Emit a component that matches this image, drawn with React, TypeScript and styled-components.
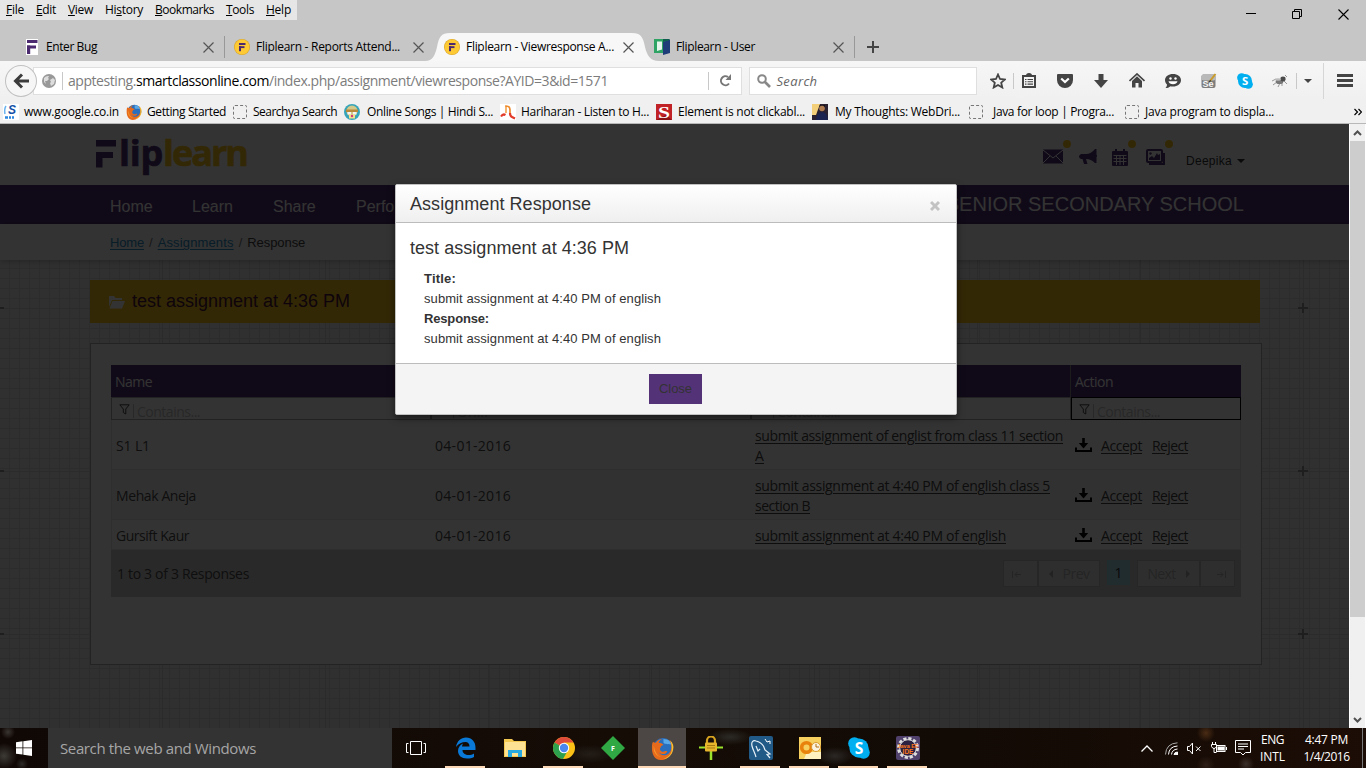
import React, { useLayoutEffect, useRef, useState } from 'react';
import styled, { createGlobalStyle, css } from 'styled-components';

const UI = `"Open Sans", "Noto Sans", sans-serif`;
const ARIAL = `"Liberation Sans", Arial, sans-serif`;

const Global = createGlobalStyle`
  * { box-sizing: border-box; }
  body { margin: 0; width: 1366px; height: 768px; overflow: hidden; font-family: ${UI}; font-size: 12px; color: #000; }
  svg { display: block; flex: none; }
`;

/* Text tracked so that it fills a given width exactly. */
const FitSpan = styled.span`
  white-space: pre;
`;
function Fit({ w, children }: { w: number; children: React.ReactNode }) {
  const ref = useRef<HTMLSpanElement>(null);
  const [spacing, setSpacing] = useState(0);
  useLayoutEffect(() => {
    const el = ref.current;
    if (!el) return;
    el.style.letterSpacing = '0px';
    const n = (el.textContent || '').length;
    setSpacing((w - el.getBoundingClientRect().width) / n);
  }, [w]);
  return <FitSpan ref={ref} style={{ letterSpacing: `${spacing}px` }}>{children}</FitSpan>;
}

const Screen = styled.div`
  width: 1366px;
  height: 768px;
  display: flex;
  flex-direction: column;
  overflow: hidden;
`;

/* ---------- browser chrome ---------- */
const TitleArea = styled.div`
  height: 61px;
  background: #c6c6c6;
  display: flex;
  flex-direction: column;
`;
const TitleRow = styled.div`
  display: flex;
  justify-content: space-between;
  height: 33px;
`;
const MenuBar = styled.div`
  width: 297px;
  height: 20px;
  background: #e6e6e6;
  padding-left: 6px;
  display: flex;
  gap: 12px;
  align-items: flex-start;
  line-height: 20px;
`;
const U = styled.u`
  text-underline-offset: 1px;
`;
const WindowButtons = styled.div`
  display: flex;
  width: 138px;
  height: 28px;
`;
const WinBtn = styled.div`
  width: 46px;
  display: flex;
  align-items: center;
  justify-content: center;
`;
const TabStrip = styled.div`
  display: flex;
  height: 28px;
  padding-left: 15px;
`;
const TabBox = styled.div<{ $active?: boolean; $sep?: boolean }>`
  position: relative;
  width: 210px;
  height: 28px;
  padding: 0 11px 0 9px;
  display: flex;
  align-items: center;
  gap: 6px;
  ${p => p.$active && css`z-index: 1;`}
  ${p => p.$sep && css`
    &::after {
      content: '';
      position: absolute;
      right: 0;
      top: 3px;
      width: 1px;
      height: 22px;
      background: #989898;
    }`}
`;
const TabShape = styled.svg`
  position: absolute;
  left: -10px;
  top: 0;
`;
const TabLabel = styled.div`
  position: relative;
  flex: 1;
  line-height: 28px;
`;
const TabIcon = styled.div`
  position: relative;
  width: 16px;
`;
const NewTab = styled.div`
  width: 36px;
  display: flex;
  align-items: center;
  justify-content: center;
`;
const Toolbar = styled.div`
  height: 39px;
  background: linear-gradient(#f6f6f6, #f0f0f0);
  display: flex;
  align-items: center;
  padding-left: 5px;
`;
const BackButton = styled.div`
  position: relative;
  z-index: 1;
  width: 32px;
  height: 32px;
  border-radius: 50%;
  border: 1px solid #c0c0c0;
  background: #f6f6f6;
  display: flex;
  align-items: center;
  justify-content: center;
`;
const UrlBox = styled.div`
  width: 710px;
  height: 28px;
  margin-left: -4px;
  background: #fff;
  border: 1px solid #dfdfdf;
  display: flex;
  align-items: center;
  padding-left: 8px;
  font-size: 14px;
  color: #7c7c7c;
`;
const VLine = styled.i<{ $h: number; $ml?: number; $mr?: number; $c?: string }>`
  width: 1px;
  height: ${p => p.$h}px;
  background: ${p => p.$c ?? '#c8c8c8'};
  margin-left: ${p => p.$ml ?? 0}px;
  margin-right: ${p => p.$mr ?? 0}px;
`;
const Host = styled.b`
  font-weight: 400;
  color: #000;
`;
const UrlText = styled.div`
  width: 640px;
  line-height: 24px;
`;
const SearchBox = styled.div`
  width: 228px;
  height: 28px;
  margin: 0 0 0 7px;
  background: #fff;
  border: 1px solid #dfdfdf;
  display: flex;
  align-items: center;
  gap: 5px;
  padding-left: 7px;
  font-style: italic;
  font-size: 13px;
  color: #666;
`;
const Slot = styled.div<{ $w?: number }>`
  width: ${p => p.$w ?? 36}px;
  height: 39px;
  display: flex;
  align-items: center;
  justify-content: center;
`;
const Bookmarks = styled.div`
  height: 24px;
  background: #f0f0f0;
  border-bottom: 1px solid #b8b8b8;
  display: flex;
  padding-left: 3px;
  line-height: 23px;
`;
const Bookmark = styled.div<{ $w: number; $gap: number }>`
  width: ${p => p.$w}px;
  display: flex;
  align-items: center;
  gap: ${p => p.$gap}px;
`;
const Dashed = styled.i`
  width: 14px;
  height: 14px;
  border: 1px dashed #777;
  border-radius: 2px;
`;

/* ---------- web page ---------- */
const Viewport = styled.div`
  position: relative;
  height: 604px;
  display: flex;
`;
const Page = styled.div`
  position: relative;
  width: 1349px;
  height: 604px;
  overflow: hidden;
  font-family: ${ARIAL};
  background: #fff;
`;
const Header = styled.header`
  height: 61px;
  padding: 0 104px 0 96px;
  display: flex;
  justify-content: space-between;
`;
const Logo = styled.div`
  display: flex;
  height: 61px;
  padding-top: 16px;
  font: 700 36px/36px "Open Sans", sans-serif;
  color: #533278;
`;
const LogoWord = styled.span<{ $gold?: boolean }>`
  margin-left: ${p => (p.$gold ? 0 : 2)}px;
  margin-top: -5px;
  color: ${p => (p.$gold ? '#fcc71f' : '#533278')};
  -webkit-text-stroke: 0.7px currentColor;
`;
const HeaderTools = styled.div`
  display: flex;
  height: 61px;
  padding-top: 25px;
`;
const ToolItem = styled.div<{ $w: number; $dot?: number }>`
  position: relative;
  width: ${p => p.$w}px;
  ${p => p.$dot !== undefined && css`
    &::after {
      content: '';
      position: absolute;
      left: ${p.$dot}px;
      top: -9px;
      width: 8px;
      height: 8px;
      border-radius: 50%;
      background: #fcc71f;
    }`}
`;
const UserName = styled.div`
  width: 59px;
  height: 24px;
  display: flex;
  align-items: center;
  gap: 5px;
  font-size: 12px;
  color: #333;
`;
const Caret = styled.i<{ $c?: string }>`
  border: 4px solid transparent;
  border-top-color: ${p => p.$c ?? '#333'};
  border-bottom: 0;
`;
const Nav = styled.nav`
  height: 39px;
  background: #533278;
  color: #fff;
  padding: 0 105px 0 110px;
  display: flex;
  align-items: center;
  font-size: 16px;
  line-height: 40px;
`;
const NavItem = styled.span<{ $w: number }>`
  width: ${p => p.$w}px;
  padding-top: 4px;
`;
const School = styled.span`
  margin-left: auto;
  font-size: 20px;
  line-height: 34px;
  margin-top: -1px;
`;
const Crumbs = styled.div`
  height: 36px;
  padding-left: 110px;
  display: flex;
  gap: 5px;
  font-size: 13px;
  line-height: 37px;
  color: #777;
  background: #fff;
  box-shadow: 0 1px 6px rgba(0, 0, 0, 0.25);
  position: relative;
`;
const CrumbLink = styled.a`
  color: #2a8fc8;
  text-decoration: underline;
  text-underline-offset: 2px;
`;
const CrumbNow = styled.span`
  color: #444;
`;
const Canvas = styled.main`
  height: 468px;
  padding: 20px 0 0 90px;
  background-color: #ededed;
  background-image:
    linear-gradient(90deg, #d4d4d4 1px, transparent 1px), linear-gradient(#d4d4d4 1px, transparent 1px),
    linear-gradient(90deg, #dddddd 1px, transparent 1px), linear-gradient(#dddddd 1px, transparent 1px);
  background-size: 163px 163px, 163px 163px, 10px 10px, 10px 10px;
  background-position: -1px 48px;
`;
const CrossLayer = styled.svg`
  position: absolute;
  left: 0;
  top: 136px;
`;
const TitleBar = styled.div`
  position: relative;
  width: 1170px;
  height: 43px;
  background: #fcc71f;
  display: flex;
  align-items: center;
  padding-left: 18px;
  gap: 5px;
  font-size: 18px;
  line-height: 45px;
  color: #4a1538;
`;
const Panel = styled.section`
  position: relative;
  width: 1172px;
  height: 322px;
  margin-top: 20px;
  padding: 21px 0 0 20px;
  border: 1px solid #b0b0b0;
  background: #fff;
`;
const Table = styled.div`
  width: 1130px;
  font: 14px/20px ${UI};
  color: #4c4c4c;
`;
const grid = css`
  display: grid;
  grid-template-columns: 320px 320px 320px 170px;
`;
const HeadRow = styled.div`
  ${grid}
  height: 32px;
  background: #533278;
  color: #fff;
  line-height: 34px;
`;
const HeadCell = styled.div<{ $sep?: boolean }>`
  height: 32px;
  ${p => (p.$sep
    ? css`margin-left: -1px; padding-left: 4px; border-left: 1px solid #8c8c8c;`
    : css`padding-left: 4px;`)}
`;
const FilterRow = styled.div`
  ${grid}
  height: 23px;
`;
const FilterCell = styled.div<{ $dark?: boolean }>`
  height: 23px;
  border: 1px solid ${p => (p.$dark ? '#000' : '#a8a8a8')};
  display: flex;
  align-items: flex-start;
  padding: 6px 0 0 7px;
  color: #c4c4c4;
  line-height: 18px;
`;
const FilterHint = styled.span`
  margin-top: -1px;
`;
const Row = styled.div<{ $h: number; $alt?: boolean }>`
  ${grid}
  height: ${p => p.$h}px;
  align-items: center;
  background: ${p => (p.$alt ? '#f5f5f5' : '#fff')};
  box-shadow: inset 1px 0 #e3e3e3, inset -1px 0 #e3e3e3, inset 0 -1px #e3e3e3;
  padding-top: 2px;
`;
const Cell = styled.div<{ $first?: boolean }>`
  padding-left: ${p => (p.$first ? 5 : 4)}px;
`;
const ActionCell = styled.div`
  padding-left: 4px;
  display: flex;
  align-items: center;
`;
const Link = styled.a<{ $ml?: number }>`
  margin-left: ${p => p.$ml ?? 0}px;
  color: #444;
  text-decoration: underline;
  text-underline-offset: 2px;
`;
const Footer = styled.div`
  height: 47px;
  background: #cdcdcd;
  display: flex;
  padding: 10px 6px 0;
`;
const Count = styled.div`
  flex: 1;
  padding-top: 4px;
`;
const PageBtn = styled.div<{ $w: number }>`
  width: ${p => p.$w}px;
  height: 27px;
  border: 1px solid #bdbdbd;
  background: #e6e6e6;
  color: #b4b4b4;
  display: flex;
  align-items: center;
  justify-content: center;
  gap: 10px;
  padding-top: 1px;
`;
const PageNo = styled.div`
  width: 23px;
  height: 25px;
  margin: 0 7px;
  background: #a5dbe8;
  color: #333;
  line-height: 26px;
  text-align: center;
`;
const Backdrop = styled.div`
  position: absolute;
  inset: 0;
  background: rgba(0, 0, 0, 0.8);
`;
const Modal = styled.div`
  position: absolute;
  left: 395px;
  top: 60px;
  width: 562px;
  height: 231px;
  border: 1px solid #c2c2c2;
  border-radius: 2px;
  background: #fff;
  box-shadow: 0 3px 7px rgba(0, 0, 0, 0.5);
  color: #333;
  display: flex;
  flex-direction: column;
  overflow: hidden;
`;
const ModalHead = styled.div`
  height: 38px;
  padding: 0 16px 0 14px;
  display: flex;
  justify-content: space-between;
  font-size: 18px;
  line-height: 38px;
  background: linear-gradient(#fff, #efefef);
  border-bottom: 1px solid #bcbcbc;
`;
const ModalBody = styled.div`
  flex: 1;
  padding: 15px 14px 0;
`;
const ModalTitle = styled.h4`
  margin: 0 0 11px;
  font-weight: 400;
  font-size: 18px;
  line-height: 20px;
`;
const Line = styled.div<{ $bold?: boolean }>`
  padding-left: 14px;
  font-size: 13px;
  line-height: 20px;
  font-weight: ${p => (p.$bold ? 700 : 400)};
`;
const ModalFoot = styled.div`
  height: 51px;
  background: #f4f4f4;
  border-top: 1px solid #bcbcbc;
  display: flex;
  justify-content: center;
  padding-top: 10px;
`;
const CloseBtn = styled.div`
  width: 53px;
  height: 30px;
  margin-right: 1px;
  background: #533278;
  color: #333;
  text-align: center;
  font-size: 13px;
  line-height: 30px;
`;
const Scrollbar = styled.div`
  width: 17px;
  height: 604px;
  background: #f0f0f0;
  border-left: 1px solid #fff;
  border-right: 1px solid #fff;
  display: flex;
  flex-direction: column;
  align-items: center;
`;
const ScrollBtn = styled.div`
  height: 17px;
  display: flex;
  align-items: center;
`;
const Thumb = styled.div`
  width: 15px;
  height: 476px;
  background: #cdcdcd;
  margin-bottom: auto;
`;

/* ---------- taskbar ---------- */
const Taskbar = styled.footer`
  height: 40px;
  display: flex;
  color: #fff;
  background:
    radial-gradient(circle at 8px 4px, #3a3532 0, transparent 7px),
    radial-gradient(circle at 4px 28px, #3d3a35 0, transparent 13px),
    radial-gradient(circle at 22px 36px, #2d2a27 0, transparent 6px),
    radial-gradient(ellipse 22px 8px at 730px 9px, #2c2a25 0, transparent 100%),
    radial-gradient(ellipse 18px 9px at 835px 28px, #2b2825 0, transparent 100%),
    radial-gradient(ellipse 26px 9px at 590px 26px, #231d18 0, transparent 100%),
    radial-gradient(circle at 1206px 5px, #4a2c14 0, transparent 9px),
    radial-gradient(circle at 1246px 36px, #3c302a 0, transparent 8px),
    radial-gradient(circle at 1206px 37px, #2e1f17 0, transparent 9px),
    linear-gradient(90deg, #100805, #150c06 45%, #120a05 70%, #1c0d06);
`;
const StartBtn = styled.div`
  width: 48px;
  display: flex;
  align-items: center;
  justify-content: center;
`;
const TaskSearch = styled.div`
  width: 344px;
  background: #333;
  color: #a6a6a6;
  padding-left: 12px;
  font-size: 15px;
  line-height: 40px;
`;
const TaskSlot = styled.div<{ $on?: boolean; $bar?: boolean; $w?: number }>`
  width: ${p => p.$w ?? 49}px;
  display: flex;
  align-items: center;
  justify-content: center;
  position: relative;
  background: ${p => (p.$on ? '#4c4744' : 'transparent')};
  ${p => p.$bar && css`
    &::after {
      content: '';
      position: absolute;
      bottom: 0;
      left: ${p.$on ? 0 : 4}px;
      right: ${p.$on ? 0 : 5}px;
      height: 2px;
      background: #fcd8b6;
    }`}
`;
const Tray = styled.div`
  margin-left: auto;
  width: 230px;
  display: flex;
  align-items: center;
`;
const TraySlot = styled.div<{ $w: number }>`
  width: ${p => p.$w}px;
  display: flex;
  justify-content: center;
`;
const TrayText = styled.div<{ $w: number }>`
  width: ${p => p.$w}px;
  text-align: center;
  line-height: 17px;
  font-size: 12px;
  padding-bottom: 1px;
`;
const ShowDesktop = styled.i`
  width: 4px;
  height: 40px;
  margin-left: auto;
  border-left: 1px solid #777;
`;

/* ---------- icons ---------- */
const FMark = ({ round }: { round?: boolean }) => (
  <svg width="16" height="16" viewBox="0 0 16 16">
    {round ? <circle cx="8" cy="8" r="8" fill="#d9a62b" /> : <rect x="2" y="0" width="12" height="16" fill="#fff" />}
    {round && <circle cx="8" cy="8" r="7.4" fill="#fdca35" />}
    <g fill="#4c2a70">
      {round ? (
        <><rect x="5" y="4" width="6.5" height="2" /><rect x="5" y="7.2" width="5.5" height="1.9" /><rect x="5" y="7.2" width="2" height="5" /></>
      ) : (
        <><rect x="3" y="1" width="10.5" height="3" /><rect x="3" y="6.5" width="9" height="3" /><rect x="3" y="6.5" width="3.2" height="8.5" /></>
      )}
    </g>
  </svg>
);
const DoorIcon = () => (
  <svg width="16" height="16" viewBox="0 0 16 16">
    <rect x="0" y="0" width="15" height="14" fill="#2fa363" />
    <path d="M3 2.500h5v8L3 12z" fill="#e6f5ec" />
    <path d="M9 3 16 .5V14l-7 2z" fill="#1d3c78" />
    <path d="M9 0h6.500v1L9 3z" fill="#0f5c50" />
  </svg>
);
const TabClose = styled.svg`
  position: relative;
`;
const X = () => (
  <TabClose width="11" height="11" viewBox="0 0 11 11">
    <path d="M.5.5l10 10M10.500.5l-10 10" stroke="#555" strokeWidth="1.200" />
  </TabClose>
);
const Firefox = ({ s }: { s: number }) => (
  <svg width={s} height={s} viewBox="0 0 24 24">
    <circle cx="12.5" cy="11.5" r="10.5" fill="#2a6fbd" />
    <path d="M13 2c5 0 8 3 9 6-3-1-8 0-9-2z" fill="#5aa9e6" />
    <path d="M2 5c1 1 2 1 3 1 2-3 5-4 7-4-3 1-4 3-4 4 2 0 4 1 5 2-1 1-3 1-3 3-1 1-1 3 1 4 3 1 4-1 6 0-1 3-6 4-9 1 3 5 11 4 13-3 1-4 0-7-2-10 3 2 4 6 3 11-1 6-6 10-12 10S1 18 1 12c0-3 0-5 1-7z" fill="#e66a1c" />
    <path d="M20 3.500c3 3 4 6 3 10-1 5-5 9-10 9.500 5-2 8-5 8.500-9 .500-4 0-7-1.500-10.500z" fill="#fbc02d" />
    <path d="M3 9c-1 6 2 11 8 12-4-1-7-5-8-12z" fill="#f59a2c" />
  </svg>
);
const Skype = ({ s }: { s: number }) => (
  <svg width={s} height={s} viewBox="0 0 24 24">
    <circle cx="12" cy="12" r="10.500" fill="#00aff0" />
    <circle cx="7" cy="7" r="6.800" fill="#00aff0" />
    <circle cx="17" cy="17" r="6.800" fill="#00aff0" />
    <text x="12" y="18.200" textAnchor="middle" fontFamily="Open Sans" fontWeight="700" fontSize="17" fill="#fff">S</text>
  </svg>
);
const Funnel = () => (
  <svg width="11" height="11" viewBox="0 0 11 11">
    <path d="M.8.8h9.400L6.800 5v5L4.300 8.500V5z" fill="none" stroke="#444" />
  </svg>
);
const Download = () => (
  <svg width="17" height="16" viewBox="0 0 17 16">
    <path d="M7.200 0h2.600v5h3.400L8.500 10.500 3.800 5h3.400zM0 9.500h2V12h13V9.500h2V14H0z" fill="#000" />
  </svg>
);
const Overflow = styled.svg`
  margin-top: 8px;
`;
const PagerGlyph = styled.svg<{ $shift: number }>`
  position: relative;
  left: ${p => p.$shift}px;
`;

const rows = [
  { name: 'S1 L1', nw: 34, h: 50, lines: [['submit assignment of englist from class 11 section', 308], ['A', 9]] },
  { name: 'Mehak Aneja', nw: 80, h: 50, alt: true, lines: [['submit assignment at 4:40 PM of english class 5', 295], ['section B', 55]] },
  { name: 'Gursift Kaur', nw: 73, h: 30, lines: [['submit assignment at 4:40 PM of english', 251]] },
] as { name: string; nw: number; h: number; alt?: boolean; lines: [string, number][] }[];

const menus: [string, string, string, number][] = [
  ['', 'F', 'ile', 18], ['', 'E', 'dit', 20], ['', 'V', 'iew', 25], ['Hi', 's', 'tory', 38],
  ['', 'B', 'ookmarks', 59], ['', 'T', 'ools', 28], ['', 'H', 'elp', 25],
];

const Tab = ({ icon, label, w, active, sep }: { icon: React.ReactNode; label: string; w: number; active?: boolean; sep?: boolean }) => (
  <TabBox $active={active} $sep={sep}>
    {active && (
      <TabShape width="238" height="28" viewBox="0 0 238 28">
        <path d="M0 28C8 28 10 22 12 14C14 4 16 0 25 0H207C216 0 218 4 220 14C222 22 225 28 234 28Z" fill="#f7f7f7" />
      </TabShape>
    )}
    <TabIcon>{icon}</TabIcon>
    <TabLabel><Fit w={w}>{label}</Fit></TabLabel>
    <X />
  </TabBox>
);

const Chrome = () => (
  <>
    <TitleArea>
      <TitleRow>
        <MenuBar>
          {menus.map(([a, u, b, w]) => <Fit key={u + b} w={w}>{a}<U>{u}</U>{b}</Fit>)}
        </MenuBar>
        <WindowButtons>
          <WinBtn><svg width="10" height="10"><path d="M0 4.500h10" stroke="#000" /></svg></WinBtn>
          <WinBtn><svg width="10" height="10" fill="none" stroke="#000"><path d="M.5 2.500h7v7h-7zM2.500 2.500v-2h7v7h-2" /></svg></WinBtn>
          <WinBtn><svg width="11" height="11"><path d="M.5.5l10 10M10.500.5l-10 10" stroke="#000" strokeWidth="1.100" /></svg></WinBtn>
        </WindowButtons>
      </TitleRow>
      <TabStrip>
        <Tab icon={<FMark />} label="Enter Bug" w={51} sep />
        <Tab icon={<FMark round />} label="Fliplearn - Reports Attend..." w={144} />
        <Tab icon={<FMark round />} label="Fliplearn - Viewresponse A..." w={148} active />
        <Tab icon={<DoorIcon />} label="Fliplearn - User" w={79} sep />
        <NewTab><svg width="12" height="12"><path d="M6 0v12M0 6h12" stroke="#444" strokeWidth="2" /></svg></NewTab>
      </TabStrip>
    </TitleArea>
    <Toolbar>
      <BackButton>
        <svg width="16" height="16" viewBox="0 0 16 16" fill="none" stroke="#3c3c3c" strokeWidth="3"><path d="M9 1.500 2.500 8 9 14.500M2.500 8H16" /></svg>
      </BackButton>
      <UrlBox>
        <svg width="14" height="14" viewBox="0 0 14 14">
          <circle cx="7" cy="7" r="7" fill="#999" />
          <path d="M2 4c2-2 4-2 5-2l-1 2 1 1-2 2H3l1 3-2-2zM8 6l3-2 2 2-1 4-3 2-1-3 1-1z" fill="#ddd" />
        </svg>
        <VLine $h={18} $ml={6} $mr={5} />
        <UrlText><Fit w={540}>apptesting.<Host>smartclassonline.com</Host>/index.php/assignment/viewresponse?AYID=3&amp;id=1571</Fit></UrlText>
        <VLine $h={18} $mr={10} />
        <svg width="13" height="13" viewBox="0 0 13 13"><path d="M10 9.500A4.500 4.500 0 1 1 9 3" fill="none" stroke="#777" strokeWidth="2" /><path d="M12 0v6H6.500z" fill="#777" /></svg>
      </UrlBox>
      <SearchBox>
        <svg width="14" height="14" viewBox="0 0 14 14" fill="none" stroke="#888" strokeWidth="2"><circle cx="5" cy="5" r="3.800" /><path d="M8 8l5 5" strokeWidth="2.600" /></svg>
        <Fit w={41}>Search</Fit>
      </SearchBox>
      <Slot $w={42}><svg width="16" height="16" viewBox="0 0 16 16"><path d="M8 1.500l2 4.500 4.800.5-3.600 3.200 1.100 4.800L8 12l-4.300 2.500 1.100-4.800L1.200 6.500 6 6z" fill="none" stroke="#444" strokeWidth="1.800" /></svg></Slot>
      <VLine $h={16} $ml={-6} $mr={-3} />
      <Slot>
        <svg width="14" height="15" viewBox="0 0 14 15"><path d="M1 3h12v11H1z" fill="#f4f4f4" stroke="#444" strokeWidth="2" /><path d="M4 2.500Q4 0 7 0t3 2.500z" fill="#444" /><path d="M3 6.500h1.500M5.500 6.500H11M3 8.800h1.500M5.500 8.800H11M3 11.100h1.500M5.500 11.100H11" stroke="#444" strokeWidth="1.100" /></svg>
      </Slot>
      <Slot><svg width="16" height="14" viewBox="0 0 16 14"><path d="M1 0h14q1 0 1 1v5a8 8 0 0 1-16 0V1q0-1 1-1z" fill="#444" /><path d="M4.200 4.500 8 8l3.800-3.500" fill="none" stroke="#fff" strokeWidth="2.200" /></svg></Slot>
      <Slot><svg width="14" height="14" viewBox="0 0 14 14"><path d="M4.500 0h5v6H14L7 14 0 6h4.500z" fill="#444" /></svg></Slot>
      <Slot><svg width="16" height="15" viewBox="0 0 16 15"><path d="M.5 8 8 1l7.500 7" fill="none" stroke="#444" strokeWidth="1.700" /><path d="M3 8l5-4.700L13 8v6.500H9.500V10h-3v4.500H3z" fill="#444" /></svg></Slot>
      <Slot>
        <svg width="16" height="16" viewBox="0 0 16 16"><path d="M8 1c4.500 0 8 2.500 8 6.200S12.500 13.500 8 13.500c-1 0-2 0-2.500-.3C4 14.500 2.500 15 .5 15 1.500 14 2 13 2 11.600 1 10.500 0 9 0 7.200 0 3.500 3.500 1 8 1z" fill="#444" /><circle cx="5.500" cy="5.500" r="1.200" fill="#fff" /><circle cx="10.500" cy="5.500" r="1.200" fill="#fff" /><path d="M3.500 8.200h9c-.5 4-8.500 4-9 0z" fill="#fff" /></svg>
      </Slot>
      <Slot>
        <svg width="16" height="16" viewBox="0 0 16 16"><rect x=".5" y="1.500" width="14" height="13.500" rx="2" fill="#7d7d7d" /><rect x=".5" y="1.500" width="14" height="6" rx="2" fill="#b9b9b9" /><text x="1.500" y="13.500" fontFamily="Liberation Sans" fontWeight="700" fontSize="9" fill="#f5f5f5">Se</text><path d="M14.500 1 9 8" stroke="#c99c2a" strokeWidth="2" /><path d="M9.500 7.300 8.500 9" stroke="#333" strokeWidth="1.200" /></svg>
      </Slot>
      <Slot><Skype s={16} /></Slot>
      <Slot $w={33}>
        <svg width="16" height="14" viewBox="0 0 16 14"><path d="M0 7l4-2M1 11l4-3M6 13l2-4M10 12l0-4M15 10l-3-3M13 1l2 2" stroke="#999" /><ellipse cx="7.500" cy="7.500" rx="3.800" ry="2.600" fill="#777" /><ellipse cx="11" cy="5" rx="2.600" ry="2.400" fill="#4a4a4a" /><ellipse cx="6" cy="5.500" rx="3" ry="1.200" fill="#bbb" /></svg>
      </Slot>
      <VLine $h={16} />
      <Slot $w={22}><Caret $c="#444" /></Slot>
      <VLine $h={36} $ml={4} $c="#d6d6d6" />
      <Slot $w={42}><svg width="16" height="13"><path d="M0 1.500h16M0 6.500h16M0 11.500h16" stroke="#444" strokeWidth="3" /></svg></Slot>
    </Toolbar>
    <Bookmarks>
      <Bookmark $w={123} $gap={5}>
        <svg width="16" height="16" viewBox="0 0 16 16"><rect width="16" height="16" fill="#fff" /><path d="M3 2Q1 5 2 10" stroke="#6bb3ee" fill="none" strokeWidth="1.500" /><text x="9" y="10" textAnchor="middle" fontFamily="Liberation Sans" fontWeight="700" fontStyle="italic" fontSize="12" fill="#1551a8">S</text><path d="M2 13.500h3M6 13.500h2M9 13.500h2" stroke="#2d86dd" strokeWidth="2.500" /></svg>
        <Fit w={95}>www.google.co.in</Fit>
      </Bookmark>
      <Bookmark $w={107} $gap={5}><Firefox s={16} /><Fit w={79}>Getting Started</Fit></Bookmark>
      <Bookmark $w={111} $gap={6}><Dashed /><Fit w={84}>Searchya Search</Fit></Bookmark>
      <Bookmark $w={156} $gap={7}>
        <svg width="16" height="16" viewBox="0 0 16 16"><circle cx="8" cy="8" r="8" fill="#36a5b9" /><circle cx="8" cy="7" r="5.500" fill="#d3c98a" /><rect x="2" y="5.500" width="12" height="2.500" fill="#b98a3a" /><rect x="3.500" y="8" width="3.500" height="2.500" fill="#f4f4f4" /><rect x="9" y="8" width="3.500" height="2.500" fill="#f4f4f4" /><rect x="5" y="10.500" width="6" height="4" fill="#f6e18c" /><circle cx="8" cy="12" r="1.200" fill="#d3397b" /></svg>
        <Fit w={126}>Online Songs | Hindi S...</Fit>
      </Bookmark>
      <Bookmark $w={156} $gap={5}>
        <svg width="16" height="16" viewBox="0 0 16 16"><rect width="16" height="16" fill="#fff" /><path d="M6 9V2q4 0 4 4v3" stroke="#ef8b2c" strokeWidth="1.700" fill="none" /><path d="M6 3v6" stroke="#f5b46e" strokeWidth="2" /><path d="M1 12.500q2-3 4.500-1.500M10 9q0 3 2 4l3 1.500" stroke="#e23b2a" strokeWidth="2.200" fill="none" /></svg>
        <Fit w={128}>Hariharan - Listen to H...</Fit>
      </Bookmark>
      <Bookmark $w={156} $gap={6}>
        <svg width="16" height="16" viewBox="0 0 16 16"><rect width="16" height="16" fill="#c02226" /><path d="M0 16 10 11 16 16z" fill="#8b1215" /><text x="8" y="13.500" textAnchor="middle" fontFamily="Liberation Serif" fontWeight="700" fontSize="16" textLength="12" lengthAdjust="spacingAndGlyphs" fill="#fff">S</text></svg>
        <Fit w={127}>Element is not clickabl...</Fit>
      </Bookmark>
      <Bookmark $w={157} $gap={7}>
        <svg width="16" height="16" viewBox="0 0 16 16"><rect width="16" height="16" fill="#2a2230" /><path d="M0 0h8L4 11H0z" fill="#f3cf7a" /><circle cx="10" cy="4.500" r="2.800" fill="#b07c50" /><path d="M7 3q3-4 6 0v-2H8z" fill="#1a1010" /><path d="M4 16q1-8 6-8t6 8z" fill="#1b2350" /></svg>
        <Fit w={125}>My Thoughts: WebDri...</Fit>
      </Bookmark>
      <Bookmark $w={156} $gap={10}><Dashed /><Fit w={121}>Java for loop | Progra...</Fit></Bookmark>
      <Bookmark $w={229} $gap={6}><Dashed /><Fit w={129}>Java program to displa...</Fit></Bookmark>
      <Overflow width="8" height="8" viewBox="0 0 8 8"><path d="M.5 1 3.500 4 .5 7M4.500 1 7.500 4 4.500 7" fill="none" stroke="#000" strokeWidth="1.200" /></Overflow>
    </Bookmarks>
  </>
);

const WebPage = () => (
  <Page>
    <Header>
      <Logo>
        <svg width="21" height="28" viewBox="0 0 21 28" fill="#533278">
          <rect x="0" y="0" width="20" height="6.500" /><rect x="0" y="12" width="17" height="6" /><rect x="0" y="12" width="6.500" height="15.500" />
        </svg>
        <LogoWord><Fit w={44}>lip</Fit></LogoWord>
        <LogoWord $gold><Fit w={84}>learn</Fit></LogoWord>
      </Logo>
      <HeaderTools>
        <ToolItem $w={36} $dot={20}>
          <svg width="20" height="15" viewBox="0 0 20 15"><rect y=".5" width="20" height="14" fill="#533278" /><path d="M0 1l10 8L20 1M0 14l7-7M20 14l-7-7" fill="none" stroke="#fff" /></svg>
        </ToolItem>
        <ToolItem $w={33}>
          <svg width="19" height="16" viewBox="0 0 19 16" fill="#533278"><path d="M16 0h1.500v5.500q1.300 1 0 3V14H16Q12 10 7 10l1.500 5H5L3.500 10H2Q0 9 0 7.500T2 5h5Q12 5 16 0z" /></svg>
        </ToolItem>
        <ToolItem $w={34} $dot={16}>
          <svg width="16" height="17" viewBox="0 0 16 17"><rect y="2" width="16" height="15" rx="1" fill="#533278" /><path d="M3 0h2v3H3zM11 0h2v3h-2z" fill="#533278" /><path d="M1.500 6.500h13M1.500 9.500h13M1.500 12.500h13M4.500 6v10M8 6v10M11.500 6v10" stroke="#fff" /></svg>
        </ToolItem>
        <ToolItem $w={40} $dot={19}>
          <svg width="19" height="16" viewBox="0 0 19 16"><path d="M3 15h15V4" fill="none" stroke="#533278" strokeWidth="2" /><rect x="1" y="1" width="15" height="12" rx="1" fill="#fff" stroke="#533278" strokeWidth="2" /><path d="M3 11V9l3-2 2 2 3-5 1 2 2-1v6z" fill="#533278" /><circle cx="4.500" cy="4.500" r="1.200" fill="#533278" /></svg>
        </ToolItem>
        <UserName><Fit w={46}>Deepika</Fit><Caret /></UserName>
      </HeaderTools>
    </Header>
    <Nav>
      <NavItem $w={82}>Home</NavItem>
      <NavItem $w={81}>Learn</NavItem>
      <NavItem $w={83}>Share</NavItem>
      <NavItem $w={50}>Perfor</NavItem>
      <School>SENIOR SECONDARY SCHOOL</School>
    </Nav>
    <Crumbs>
      <CrumbLink><Fit w={34}>Home</Fit></CrumbLink><span>/</span>
      <CrumbLink><Fit w={76}>Assignments</Fit></CrumbLink><span>/</span>
      <CrumbNow><Fit w={58}>Response</Fit></CrumbNow>
    </Crumbs>
    <Canvas>
      <CrossLayer width="1349" height="468" stroke="#949494" strokeWidth="2">
        {[48, 211, 374].map(y => (
          <path key={y} d={`M0 ${y}H4M1298 ${y}H1308M1303 ${y - 5}V${y + 5}`} />
        ))}
      </CrossLayer>
      <TitleBar>
        <svg width="19" height="14" viewBox="0 0 19 14" fill="#fff"><path d="M1 1h5l1.500 2H14v2H4L1 12z" /><path d="M4.500 6H17l-3 7.500H1.500z" /></svg>
        <Fit w={218}>test assignment at 4:36 PM</Fit>
      </TitleBar>
      <Panel>
        <Table>
          <HeadRow>
            <HeadCell><Fit w={37}>Name</Fit></HeadCell>
            <HeadCell />
            <HeadCell />
            <HeadCell $sep><Fit w={38}>Action</Fit></HeadCell>
          </HeadRow>
          <FilterRow>
            {['Contains...', 'On...', 'Contains...', 'Contains...'].map((t, i) => (
              <FilterCell key={i} $dark={i === 3}>
                <Funnel /><VLine $h={14} $ml={3} $mr={3} /><FilterHint><Fit w={t === 'On...' ? 31 : 63}>{t}</Fit></FilterHint>
              </FilterCell>
            ))}
          </FilterRow>
          {rows.map(r => (
            <Row key={r.name} $h={r.h} $alt={r.alt}>
              <Cell $first><Fit w={r.nw}>{r.name}</Fit></Cell>
              <Cell><Fit w={76}>04-01-2016</Fit></Cell>
              <Cell>{r.lines.map(([t, w]) => <div key={t}><Link><Fit w={w}>{t}</Fit></Link></div>)}</Cell>
              <ActionCell>
                <Download />
                <Link $ml={9}><Fit w={41}>Accept</Fit></Link>
                <Link $ml={10}><Fit w={36}>Reject</Fit></Link>
              </ActionCell>
            </Row>
          ))}
          <Footer>
            <Count><Fit w={132}>1 to 3 of 3 Responses</Fit></Count>
            <PageBtn $w={35}>
              <PagerGlyph $shift={-4} width="9" height="7" stroke="#b4b4b4" fill="none"><path d="M.5 0v7M9 3.500H3M5.500 1 3 3.500 5.500 6" /></PagerGlyph>
            </PageBtn>
            <PageBtn $w={62}><svg width="4" height="8"><path d="M4 0v8L0 4z" fill="#aaa" /></svg><Fit w={27}>Prev</Fit></PageBtn>
            <PageNo>1</PageNo>
            <PageBtn $w={63}><Fit w={28}>Next</Fit><svg width="4" height="8"><path d="M0 0v8l4-4z" fill="#aaa" /></svg></PageBtn>
            <PageBtn $w={35}>
              <PagerGlyph $shift={4} width="9" height="7" stroke="#b4b4b4" fill="none"><path d="M8.500 0v7M0 3.500h6M3.500 1 6 3.500 3.500 6" /></PagerGlyph>
            </PageBtn>
          </Footer>
        </Table>
      </Panel>
    </Canvas>
    <Backdrop />
    <Modal>
      <ModalHead>
        <Fit w={181}>Assignment Response</Fit>
        <svg width="10" height="42" viewBox="0 0 10 42"><path d="M1 17l8 8M9 17l-8 8" stroke="#c2c2c2" strokeWidth="3" /></svg>
      </ModalHead>
      <ModalBody>
        <ModalTitle><Fit w={219}>test assignment at 4:36 PM</Fit></ModalTitle>
        <Line $bold><Fit w={32}>Title:</Fit></Line>
        <Line><Fit w={237}>submit assignment at 4:40 PM of english</Fit></Line>
        <Line $bold><Fit w={65}>Response:</Fit></Line>
        <Line><Fit w={237}>submit assignment at 4:40 PM of english</Fit></Line>
      </ModalBody>
      <ModalFoot><CloseBtn><Fit w={33}>Close</Fit></CloseBtn></ModalFoot>
    </Modal>
  </Page>
);

const TaskBar = () => (
  <Taskbar>
    <StartBtn><svg width="16" height="16" viewBox="0 0 16 16" fill="#fff"><path d="M0 2.200 6.500 1.300v6.200H0zM7.300 1.200 16 0v7.500H7.300zM0 8.300h6.500v6.200L0 13.700zM7.300 8.300H16V16l-8.700-1.300z" /></svg></StartBtn>
    <TaskSearch><Fit w={196}>Search the web and Windows</Fit></TaskSearch>
    <TaskSlot $w={47}><svg width="20" height="14" viewBox="0 0 20 14" fill="none" stroke="#fff"><path d="M4.500.5h11v13h-11zM2.500 2.500h-2v9h2M17.500 2.500h2v9h-2" /></svg></TaskSlot>
    <TaskSlot $w={2} />
    <TaskSlot $bar>
      <svg width="21" height="22" viewBox="0 0 21 22"><path d="M1 10C2 4 6 .5 11 .5c6 0 9.500 4.500 9.500 10V13H7.500c0 3.500 3 5 6 5 2 0 4-.500 5.500-1.500V20c-2 1-4 1.500-7 1.500C6.500 21.500 3 18.500 3 14c0-3.500 2-6 5-7.500-.500 1-1 2-1 3h7.500c0-3-1.500-4.500-4-4.500C7 5 3.500 6.500 1 10z" fill="#0a78d7" /></svg>
    </TaskSlot>
    <TaskSlot>
      <svg width="22" height="18" viewBox="0 0 22 18"><path d="M0 0h8l2 2h12v16H0z" fill="#f3c952" /><path d="M1 3h20v14H1z" fill="#fde293" /><path d="M4 18v-7h14v7h-4v-4H8v4z" fill="#28a9e0" /></svg>
    </TaskSlot>
    <TaskSlot $bar>
      <svg width="22" height="22" viewBox="0 0 22 22"><circle cx="11" cy="11" r="11" fill="#fbc116" /><path d="M11 11 1.500 5.500A11 11 0 0 1 20.500 5.500H11z" fill="#de4b3b" /><path d="M11 11 1.500 5.500A11 11 0 0 0 10 22l4.500-8z" fill="#2da04e" /><circle cx="11" cy="11" r="5.200" fill="#fff" /><circle cx="11" cy="11" r="4.200" fill="#4a87ee" /></svg>
    </TaskSlot>
    <TaskSlot>
      <svg width="24" height="24" viewBox="0 0 24 24"><path d="M12 0 24 12 12 24 0 12z" fill="#30a843" /><text x="12" y="14.500" textAnchor="middle" fontFamily="Open Sans" fontWeight="700" fontSize="7" fill="#fff">F</text></svg>
    </TaskSlot>
    <TaskSlot $w={1} />
    <TaskSlot $on $bar $w={48}><Firefox s={23} /></TaskSlot>
    <TaskSlot $w={50}>
      <svg width="24" height="24" viewBox="0 0 24 24"><path d="M0 11.500h24" stroke="#9be22c" strokeWidth="2" /><path d="M12 12v12" stroke="#9be22c" strokeWidth="2.500" /><path d="M8 8V4.500a4 4 0 0 1 8 0V8" fill="none" stroke="#d9a520" strokeWidth="2.200" /><rect x="6" y="6.500" width="12" height="9" rx="1" fill="#e6b62d" /><path d="M8 9.500h8M8 12h8" stroke="#a87a12" /></svg>
    </TaskSlot>
    <TaskSlot $bar>
      <svg width="24" height="24" viewBox="0 0 24 24"><rect width="24" height="24" rx="2" fill="#215a86" /><path d="M7 21C6 17 4 14 3 10 2 6 4 4 7 5c5 1 8 5 9 9l5 4-3 .5 3 3.500M7 10l2 5 2-2" fill="none" stroke="#e6f0f8" strokeWidth="1.200" /><path d="M16 3l2 3 3-1v3" fill="none" stroke="#fff" /></svg>
    </TaskSlot>
    <TaskSlot $bar>
      <svg width="22" height="22" viewBox="0 0 22 22"><rect width="22" height="22" fill="#f7cf5f" /><path d="M8 15h14v7H5z" fill="#fff0c0" /><circle cx="7.500" cy="10.500" r="4.800" fill="none" stroke="#e8820c" strokeWidth="3.600" /><circle cx="17" cy="10" r="4.500" fill="#fbf3e0" stroke="#d89a30" /><path d="M17 7v3h3" stroke="#b06d10" fill="none" /></svg>
    </TaskSlot>
    <TaskSlot $bar><Skype s={22} /></TaskSlot>
    <TaskSlot $bar>
      <svg width="24" height="24" viewBox="0 0 24 24"><rect width="24" height="24" rx="2" fill="#50406c" /><circle cx="12" cy="12" r="9" fill="none" stroke="#ddd" strokeWidth="4" strokeDasharray="3 1.712" /><circle cx="12" cy="12" r="8.300" fill="#2c2140" stroke="#ddd" /><text x="12" y="11.500" textAnchor="middle" fontFamily="Liberation Sans" fontSize="6" fontWeight="700" textLength="21" lengthAdjust="spacingAndGlyphs" fill="#ff7a1c">Java EE</text><text x="12" y="18" textAnchor="middle" fontFamily="Liberation Sans" fontSize="6.500" fontWeight="700" fill="#ff7a1c">IDE</text></svg>
    </TaskSlot>
    <Tray>
      <TraySlot $w={22}><svg width="12" height="7"><path d="M.5 6.500 6 1l5.500 5.500" fill="none" stroke="#fff" strokeWidth="1.300" /></svg></TraySlot>
      <TraySlot $w={27}>
        <svg width="13" height="13" viewBox="0 0 13 13" fill="none" stroke="#fff"><path d="M.5 12.500Q1 1.500 12.500.8" stroke="#aaa" /><path d="M3.500 12.500Q4 4.500 12.500 4M6.500 12.500q.5-5 6-5.500" /><path d="M9 12.500q.5-2.500 3.500-2.500v3z" fill="#fff" /></svg>
      </TraySlot>
      <TraySlot $w={18}>
        <svg width="15" height="13" viewBox="0 0 15 13" fill="none" stroke="#fff"><path d="M.5 4.500h2l3-3.500v11l-3-3.500h-2zM9 4.500l4.500 4.500M13.500 4.500 9 9" /></svg>
      </TraySlot>
      <TraySlot $w={32}>
        <svg width="16" height="12" viewBox="0 0 16 12" fill="none" stroke="#fff"><rect x="5.500" y="3.500" width="8.500" height="6" /><rect x="7" y="5" width="6" height="3" fill="#fff" /><path d="M15.500 5v3M1.500 0v2M4.500 0v2M.5 2.500h5v2q-1 2-2.500 2T.5 4.500zM3 6v4.500h2.500" /></svg>
      </TraySlot>
      <TraySlot $w={16}>
        <svg width="16" height="16" viewBox="0 0 16 16" fill="none" stroke="#fff"><path d="M.5.5h15v12h-5L8 15 5.500 12.500h-5zM3 4h10M3 6.500h10M3 9h6" /></svg>
      </TraySlot>
      <TrayText $w={43}><Fit w={23}>ENG</Fit><br /><Fit w={25}>INTL</Fit></TrayText>
      <TrayText $w={65}><Fit w={43}>4:47 PM</Fit><br /><Fit w={46}>1/4/2016</Fit></TrayText>
      <ShowDesktop />
    </Tray>
  </Taskbar>
);

export default function App() {
  return (
    <Screen>
      <Global />
      <Chrome />
      <Viewport>
        <WebPage />
        <Scrollbar>
          <ScrollBtn><svg width="9" height="6"><path d="M1 5 4.500 1.500 8 5" fill="none" stroke="#505050" strokeWidth="2" /></svg></ScrollBtn>
          <Thumb />
          <ScrollBtn><svg width="9" height="6"><path d="M1 1 4.500 4.500 8 1" fill="none" stroke="#505050" strokeWidth="2" /></svg></ScrollBtn>
        </Scrollbar>
      </Viewport>
      <TaskBar />
    </Screen>
  );
}
